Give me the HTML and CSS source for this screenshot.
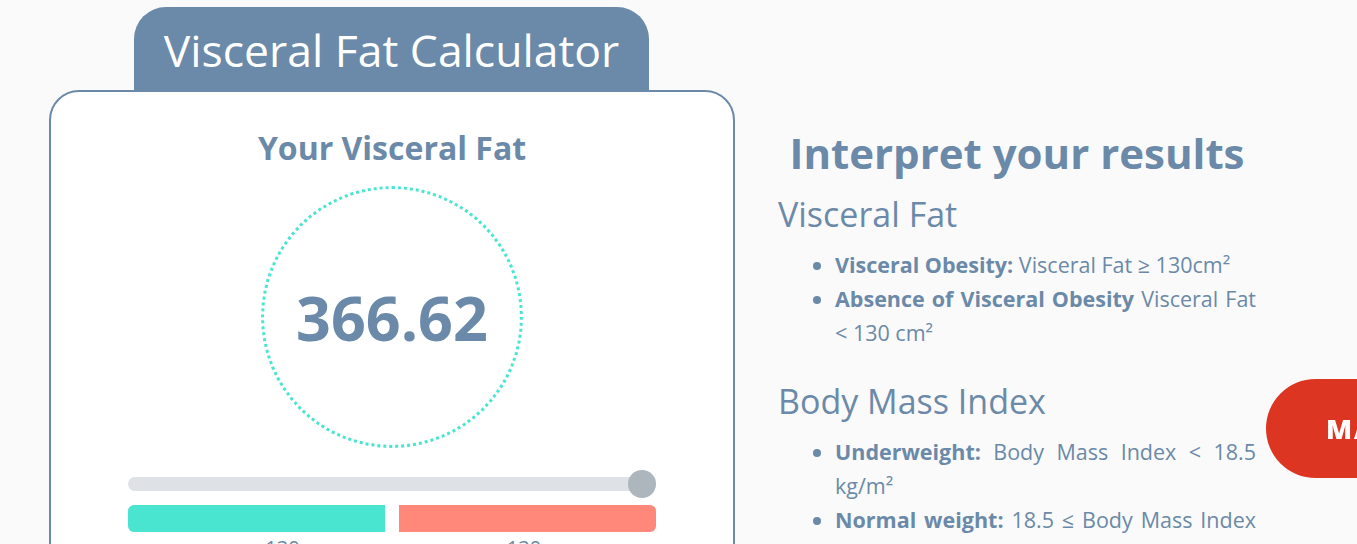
FILE: index.html
```html
<!DOCTYPE html>
<html lang="en">
<head>
    <meta charset="UTF-8">
    <title>Visceral Fat Calculator</title>
    <meta name="viewport" content="width=device-width">
    <link rel="stylesheet" href="styles.css">
</head>
<body>

<div class="page">

  <div class="calc">
    <div class="calc-tab">Visceral Fat Calculator</div>
    <div class="calc-card">
      <div class="card-title">Your Visceral Fat</div>
      <div class="result-ring">
        <span class="result-value">366.62</span>
      </div>
      <div class="slider">
        <div class="slider-track"></div>
        <div class="slider-thumb"></div>
      </div>
      <div class="scale">
        <div class="scale-part scale-good"></div>
        <div class="scale-part scale-bad"></div>
      </div>
      <div class="scale-labels">
        <span class="label-low">130</span>
        <span>130</span>
      </div>
    </div>
  </div>

  <div class="results">
    <h1 class="results-title">Interpret your results</h1>

    <h3 class="results-sub">Visceral Fat</h3>
    <ul class="results-list">
      <li><b>Visceral Obesity:</b> Visceral Fat &ge; 130cm&sup2;</li>
      <li><b>Absence of Visceral Obesity</b> Visceral Fat &lt; 130 cm&sup2;</li>
    </ul>

    <h3 class="results-sub">Body Mass Index</h3>
    <ul class="results-list">
      <li><b>Underweight:</b> Body Mass Index &lt; 18.5 kg/m&sup2;</li>
      <li><b>Normal weight:</b> 18.5 &le; Body Mass Index &lt; 25 kg/m&sup2;</li>
      <li><b>Overweight:</b> 25 &le; Body Mass Index &lt; 30 kg/m&sup2;</li>
    </ul>
  </div>

</div>

<a class="cta" href="#">MAKE AN APPOINTMENT</a>

</body>
</html>
```

FILE: styles.css
```css
body {margin: 0;
      background: #fafafa;
      color: #6b89a8;
      font-family: "Open Sans", "Noto Sans", sans-serif;}

.page {display: flex;
       padding-left: 49px;
       padding-top: 7px;}

.calc {width: 686px;
       flex: none;}

.calc-tab {margin-left: 85px;
           width: 515px;
           height: 83px;
           background: #6b89a8;
           color: #fff;
           border-radius: 32px 32px 0 0;
           font-size: 44.5px;
           font-weight: 500;
           line-height: 86px;
           text-align: center;}

.calc-card {height: 600px;
            box-sizing: border-box;
            background: #fff;
            border: 2px solid #6b89a8;
            border-radius: 30px;
            padding: 36px 77px 0;}

.card-title {font-size: 32px;
             font-weight: bold;
             text-align: center;
             line-height: 40px;}

.result-ring {width: 262px;
              height: 262px;
              box-sizing: border-box;
              margin: 18px auto 0;
              border: 3px dotted #48e5d0;
              border-radius: 50%;
              display: flex;
              align-items: center;
              justify-content: center;}

.result-value {font-size: 61px;
               font-weight: bold;}

.slider {position: relative;
         margin-top: 22px;
         height: 28px;
         display: flex;
         align-items: center;}

.slider-track {flex: 1;
               height: 14px;
               border-radius: 7px;
               background: #dee1e6;}

.slider-thumb {position: absolute;
               right: 0;
               top: 0;
               width: 28px;
               height: 28px;
               border-radius: 50%;
               background: #adb5bd;}

.scale {display: flex;
        gap: 14px;
        margin-top: 7px;}

.scale-part {flex: 1;
             height: 27px;}

.scale-good {background: #4ae5d0;
             border-radius: 6px 0 0 6px;}

.scale-bad {background: #ff887a;
            border-radius: 0 6px 6px 0;}

.scale-labels {display: grid;
               grid-template-columns: 1fr 1fr;
               font-size: 20px;
               line-height: 28px;
               margin-top: 2px;}

.scale-labels span {text-align: center;}

.scale-labels .label-low {padding-left: 45px;}

.results {width: 478px;
          margin-left: 43px;
          flex: none;}

.results-title {font-size: 42px;
                text-align: center;
                margin: 118px 0 0;
                line-height: 56px;}

.results-sub {font-size: 34px;
              font-weight: normal;
              margin: 11px 0 0;
              line-height: 44px;}

.results-list {margin: 12px 0 29px;
               padding-left: 57px;
               font-size: 21.5px;
               line-height: 34px;
               text-align: justify;}

.cta {position: fixed;
      left: 1266px;
      top: 379px;
      height: 99px;
      width: 420px;
      border-radius: 50px;
      background: #dc3522;
      color: #fff;
      font-size: 27px;
      font-weight: 800;
      letter-spacing: 2px;
      line-height: 99px;
      padding-left: 60px;
      box-sizing: border-box;
      text-decoration: none;
      white-space: nowrap;}
```
